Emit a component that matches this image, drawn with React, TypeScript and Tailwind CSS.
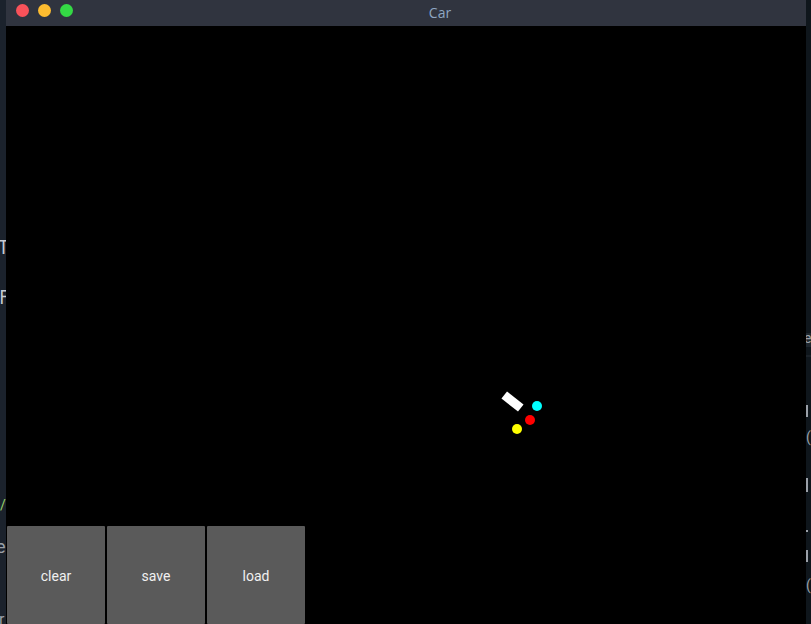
import React from "react";

export default function App() {
  return (
    <div className="flex h-[624px] w-[811px] overflow-hidden bg-black" style={{ fontFamily: "Roboto, 'Noto Sans', sans-serif" }}>
      {/* left background strip (edge of another window behind) */}
      <div className="relative h-full w-[6px] shrink-0 overflow-hidden bg-[#1b222c] text-[#c8ccd2]">
        <span className="absolute left-[-2px] top-[237px] text-[20px] leading-none" style={{ fontFamily: "'Open Sans', sans-serif" }}>T</span>
        <span className="absolute left-[-1px] top-[287px] text-[20px] leading-none" style={{ fontFamily: "'Open Sans', sans-serif" }}>F</span>
        <span className="absolute left-[0px] top-[498px] text-[14px] leading-none text-[#9bd46a]">/</span>
        <span className="absolute left-[-4px] top-[538px] text-[18px] leading-none text-[#9aa0a8]">e</span>
        <span className="absolute left-[-1px] top-[612px] text-[16px] leading-none text-[#9aa0a8]">r</span>
      </div>

      {/* window */}
      <div className="flex h-full w-[800px] shrink-0 flex-col">
        <div className="relative flex h-[26px] shrink-0 items-start bg-[#30343f]">
          <div className="flex items-center gap-[9px] pl-[10px] pt-[4px]">
            <span className="h-[13px] w-[13px] rounded-full bg-[#f9525a]" />
            <span className="h-[13px] w-[13px] rounded-full bg-[#fdbc30]" />
            <span className="h-[13px] w-[13px] rounded-full bg-[#34d945]" />
          </div>
          <div className="absolute inset-x-0 top-0 flex h-[24px] items-center justify-center pl-[68px] text-[14px] text-[#8ea6c2]" style={{ fontFamily: "'Open Sans', sans-serif" }}>
            Car
          </div>
        </div>
        <div className="relative flex flex-1 flex-col justify-end bg-black">
          {/* car on the canvas */}
          <div className="absolute left-[496px] top-[371px] h-[9px] w-[21px] rotate-[38deg] bg-white" />
          <div className="absolute left-[526px] top-[375px] h-[10px] w-[10px] rounded-full bg-[#00ffff]" />
          <div className="absolute left-[519px] top-[389px] h-[10px] w-[10px] rounded-full bg-[#ff0000]" />
          <div className="absolute left-[506px] top-[398px] h-[10px] w-[10px] rounded-full bg-[#ffff00]" />

          <div className="flex gap-[2px] pl-[1px]">
            {["clear", "save", "load"].map((t) => (
              <button key={t} className="flex h-[98px] w-[98px] items-center justify-center rounded-[1px] text-[14px] text-[#f0f0f0] bg-[#5a5a5a]">
                <span className="translate-y-[1px]">{t}</span>
              </button>
            ))}
          </div>
        </div>
      </div>

      {/* right background strip (edge of another window behind) */}
      <div className="relative h-full w-[5px] shrink-0 overflow-hidden bg-[#0f161c] text-[#9aa0a8]">
        <div className="absolute left-0 top-[333px] h-[14px] w-[5px] bg-[#1e262e]" />
        <span className="absolute left-[-2px] top-[331px] text-[14px] leading-none">e</span>
        <div className="absolute left-0 top-[355px] h-[2px] w-[5px] bg-[#1a2128]" />
        <span className="absolute left-0 top-[405px] h-[12px] w-[2px] bg-[#9aa0a8]" />
        <span className="absolute left-0 top-[430px] text-[14px] leading-none">(</span>
        <span className="absolute left-0 top-[478px] h-[14px] w-[2px] bg-[#9aa0a8]" />
        <span className="absolute left-0 top-[530px] h-[2px] w-[2px] bg-[#9aa0a8]" />
        <span className="absolute left-0 top-[550px] h-[12px] w-[2px] bg-[#9aa0a8]" />
        <span className="absolute left-0 top-[578px] text-[14px] leading-none">(</span>
      </div>
    </div>
  );
}
